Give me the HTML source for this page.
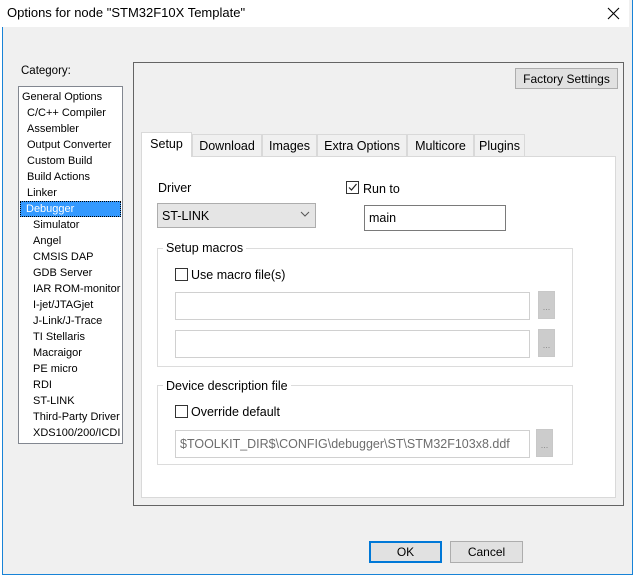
<!DOCTYPE html>
<html><head><meta charset="utf-8"><style>
*{margin:0;padding:0;box-sizing:border-box}
body{width:634px;height:577px;background:#fff;position:relative;overflow:hidden;font-family:"Liberation Sans",sans-serif;font-size:12.5px;color:#000}
.a{position:absolute}
.win{left:2px;top:0;width:631px;height:575px;background:#f0f0f0;border:1px solid #1883d7;border-top:none}
.title{left:0;top:0;width:629px;height:27px;background:#fff}
.lb div{height:16px;line-height:16px;font-size:11px;white-space:nowrap}
.tab{top:134px;height:22px;line-height:22px;border:1px solid #d9d9d9;border-bottom:none;background:#f0f0f0;text-align:center;font-size:12.5px}
.cb{width:13px;height:13px;border:1px solid #333;background:#fff}
.inp{background:#fff;border:1px solid #d0d0d0}
.dots{background:#ccc;border:1px solid #c8c8c8;color:#888;font-size:9px;text-align:center;line-height:30px}
.grp{border:1px solid #dcdcdc}
.gl{background:#fff;padding:0 3px;line-height:14px}
.btn{background:#e1e1e1;border:1px solid #adadad;text-align:center;font-size:12px}
</style></head><body>
<div class="a win"></div>
<div class="a title"></div>
<div class="a" style="left:7px;top:5px;font-size:13px">Options for node "STM32F10X Template"</div>
<svg class="a" style="left:607px;top:7px" width="13" height="13"><path d="M1 1L12 12M12 1L1 12" stroke="#000" stroke-width="1.1"/></svg>
<div class="a" style="left:21px;top:65px;font-size:11.5px">Category:</div>
<div class="a lb" style="left:18px;top:86px;width:105px;height:358px;background:#fff;border:1px solid #828790;padding-top:2px">
<div style="padding-left:3px">General Options</div>
<div style="padding-left:8px">C/C++ Compiler</div>
<div style="padding-left:8px">Assembler</div>
<div style="padding-left:8px">Output Converter</div>
<div style="padding-left:8px">Custom Build</div>
<div style="padding-left:8px">Build Actions</div>
<div style="padding-left:8px">Linker</div>
<div style="padding-left:6px;margin:0 1px;background:#3399ff;color:#fff;outline:1px dotted #000;outline-offset:-1px">Debugger</div>
<div style="padding-left:14px">Simulator</div>
<div style="padding-left:14px">Angel</div>
<div style="padding-left:14px">CMSIS DAP</div>
<div style="padding-left:14px">GDB Server</div>
<div style="padding-left:14px">IAR ROM-monitor</div>
<div style="padding-left:14px">I-jet/JTAGjet</div>
<div style="padding-left:14px">J-Link/J-Trace</div>
<div style="padding-left:14px">TI Stellaris</div>
<div style="padding-left:14px">Macraigor</div>
<div style="padding-left:14px">PE micro</div>
<div style="padding-left:14px">RDI</div>
<div style="padding-left:14px">ST-LINK</div>
<div style="padding-left:14px">Third-Party Driver</div>
<div style="padding-left:14px">XDS100/200/ICDI</div>
</div>
<div class="a" style="left:133px;top:62px;width:491px;height:444px;border:1px solid #646464"></div>
<div class="a btn" style="left:515px;top:68px;width:103px;height:21px;line-height:20px">Factory Settings</div>
<div class="a" style="left:141px;top:156px;width:475px;height:342px;background:#fff;border:1px solid #d9d9d9"></div>
<div class="a tab" style="left:192px;width:70px">Download</div>
<div class="a tab" style="left:262px;width:55px">Images</div>
<div class="a tab" style="left:317px;width:90px">Extra Options</div>
<div class="a tab" style="left:407px;width:67px">Multicore</div>
<div class="a tab" style="left:474px;width:51px">Plugins</div>
<div class="a tab" style="left:141px;top:132px;width:51px;height:25px;background:#fff;line-height:22px">Setup</div>
<div class="a" style="left:158px;top:181px">Driver</div>
<div class="a" style="left:157px;top:203px;width:159px;height:25px;background:#e5e5e5;border:1px solid #adadad;padding-left:4px;line-height:24px">ST-LINK</div>
<svg class="a" style="left:300px;top:211px" width="10" height="7"><path d="M1 1L5 5L9 1" stroke="#555" fill="none"/></svg>
<div class="a cb" style="left:346px;top:181px"></div>
<svg class="a" style="left:347px;top:182px" width="11" height="11"><path d="M2 5.5L4.5 8L9.5 2" stroke="#222" fill="none" stroke-width="1.2"/></svg>
<div class="a" style="left:363px;top:182px">Run to</div>
<div class="a" style="left:364px;top:205px;width:142px;height:26px;background:#fff;border:1px solid #7a7a7a;padding-left:4px;line-height:24px">main</div>
<div class="a grp" style="left:157px;top:248px;width:416px;height:119px"></div>
<div class="a gl" style="left:163px;top:241px">Setup macros</div>
<div class="a cb" style="left:175px;top:268px"></div>
<div class="a" style="left:191px;top:268px">Use macro file(s)</div>
<div class="a inp" style="left:175px;top:292px;width:355px;height:28px"></div>
<div class="a dots" style="left:538px;top:291px;width:17px;height:28px">...</div>
<div class="a inp" style="left:175px;top:330px;width:355px;height:28px"></div>
<div class="a dots" style="left:538px;top:329px;width:17px;height:28px">...</div>
<div class="a grp" style="left:157px;top:385px;width:416px;height:80px"></div>
<div class="a gl" style="left:163px;top:379px">Device description file</div>
<div class="a cb" style="left:175px;top:405px"></div>
<div class="a" style="left:191px;top:405px">Override default</div>
<div class="a inp" style="left:175px;top:430px;width:355px;height:28px;color:#6d6d6d;padding-left:4px;line-height:26px">$TOOLKIT_DIR$\CONFIG\debugger\ST\STM32F103x8.ddf</div>
<div class="a dots" style="left:536px;top:429px;width:17px;height:28px">...</div>
<div class="a btn" style="left:369px;top:541px;width:73px;height:22px;border:2px solid #0078d7;line-height:19px">OK</div>
<div class="a btn" style="left:450px;top:541px;width:73px;height:22px;line-height:21px">Cancel</div>
</body></html>
